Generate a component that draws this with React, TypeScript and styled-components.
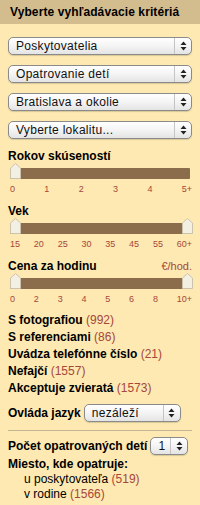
import React from 'react'
import styled, { createGlobalStyle } from 'styled-components'

const GlobalStyle = createGlobalStyle`
  html, body {
    margin: 0;
    padding: 0;
    background: #fde9b1;
  }
  body {
    font-family: "Liberation Sans", Arial, sans-serif;
    color: #000;
  }
`

const Panel = styled.div`
  width: 200px;
  height: 505px;
  overflow: hidden;
  background: #fde9b1;
  display: flex;
  flex-direction: column;
`

const Header = styled.div`
  height: 24px;
  flex-shrink: 0;
  background: #d3bc8d;
  font-weight: bold;
  font-size: 12px;
  line-height: 24px;
  padding-left: 10px;
  letter-spacing: 0.1px;
`

const Body = styled.div`
  display: flex;
  flex-direction: column;
  padding: 13px 8px 0 8px;
`

const SelectStack = styled.div`
  display: flex;
  flex-direction: column;
  gap: 10px;
`

const SelectBox = styled.div<{ $width?: number }>`
  box-sizing: border-box;
  height: 18px;
  width: ${({ $width }) => ($width ? `${$width}px` : '100%')};
  display: flex;
  align-items: stretch;
  border: 1px solid #8a8a8a;
  border-radius: 5px;
  background: linear-gradient(#ffffff 0%, #f4f4f4 50%, #e4e4e4 100%);
  box-shadow: 0 1px 1px rgba(0, 0, 0, 0.15);
  font-size: 12px;
  font-weight: normal;
  letter-spacing: 0.3px;
  flex-shrink: 0;
`

const SelectText = styled.span`
  flex: 1;
  padding-left: 7px;
  line-height: 16px;
  white-space: nowrap;
  overflow: hidden;
  color: #111;
`

const SelectArrows = styled.span`
  width: 16px;
  border-left: 1px solid #c4c4c4;
  display: flex;
  align-items: center;
  justify-content: center;
`

const Arrows = () => (
  <svg width="7" height="10" viewBox="0 0 7 10">
    <path d="M3.5 0.5 L6.5 4 L0.5 4 Z" fill="#222" />
    <path d="M0.5 6 L6.5 6 L3.5 9.5 Z" fill="#222" />
  </svg>
)

const Select = ({ label, width }: { label: string; width?: number }) => (
  <SelectBox $width={width}>
    <SelectText>{label}</SelectText>
    <SelectArrows>
      <Arrows />
    </SelectArrows>
  </SelectBox>
)

const SliderBlock = styled.div<{ $top: number }>`
  display: flex;
  flex-direction: column;
  margin-top: ${({ $top }) => $top}px;
`

const LabelRow = styled.div`
  display: flex;
  justify-content: space-between;
  align-items: baseline;
`

const Label = styled.span`
  font-weight: bold;
  font-size: 12px;
  line-height: 14px;
`

const Unit = styled.span`
  font-size: 11px;
  color: #a5473c;
`

const TrackWrap = styled.div`
  position: relative;
  margin: 0 2px 0 2px;
  height: 16px;
  display: flex;
  align-items: flex-end;
`

const Track = styled.div`
  height: 11px;
  width: 100%;
  background: #8b6c4b;
  border-radius: 1px;
`

const Thumb = styled.svg<{ $side: 'left' | 'right' }>`
  position: absolute;
  top: 0;
  ${({ $side }) => ($side === 'left' ? 'left: 0;' : 'right: -3px;')}
`

const ThumbIcon = ({ side }: { side: 'left' | 'right' }) => (
  <Thumb $side={side} width="11" height="16" viewBox="0 0 11 16">
    <path
      d="M0.5 5 L5.5 0.5 L10.5 5 L10.5 15.5 L0.5 15.5 Z"
      fill="#f3f0e3"
      stroke="#cbc3ae"
      strokeWidth="1"
    />
  </Thumb>
)

const Ticks = styled.div`
  display: flex;
  justify-content: space-between;
  margin: 5px 0 0 2px;
  font-size: 9px;
  line-height: 11px;
  color: #a5473c;
`

const Slider = ({ ticks, range }: { ticks: string[]; range?: boolean }) => (
  <>
    <TrackWrap>
      <Track />
      <ThumbIcon side="left" />
      {range && <ThumbIcon side="right" />}
    </TrackWrap>
    <Ticks>
      {ticks.map((t) => (
        <span key={t}>{t}</span>
      ))}
    </Ticks>
  </>
)

const FilterList = styled.div`
  display: flex;
  flex-direction: column;
  margin-top: 7px;
`

const Filter = styled.div`
  font-weight: bold;
  font-size: 12px;
  line-height: 17px;
`

const Count = styled.span`
  font-weight: normal;
  color: #a5473c;
`

const InlineRow = styled.div<{ $top: number }>`
  display: flex;
  align-items: center;
  gap: 3px;
  margin-top: ${({ $top }) => $top}px;
  font-weight: bold;
  font-size: 12px;
`

const Divider = styled.hr`
  border: none;
  border-top: 1px solid #c2b594;
  margin: 8px 0 0 0;
`

const Place = styled.div`
  margin-top: 2px;
  font-weight: bold;
  font-size: 12px;
  line-height: 15px;
`

const PlaceItem = styled.div`
  font-size: 12px;
  line-height: 15px;
  padding-left: 16px;
`

export default function App() {
  return (
    <>
      <GlobalStyle />
      <Panel>
        <Header>Vyberte vyhľadávacie kritériá</Header>
        <Body>
          <SelectStack>
            <Select label="Poskytovatelia" />
            <Select label="Opatrovanie detí" />
            <Select label="Bratislava a okolie" />
            <Select label="Vyberte lokalitu..." />
          </SelectStack>

          <SliderBlock $top={10}>
            <Label>Rokov skúseností</Label>
            <Slider ticks={['0', '1', '2', '3', '4', '5+']} />
          </SliderBlock>

          <SliderBlock $top={9}>
            <Label>Vek</Label>
            <Slider ticks={['15', '20', '25', '30', '35', '45', '55', '60+']} range />
          </SliderBlock>

          <SliderBlock $top={9}>
            <LabelRow>
              <Label>Cena za hodinu</Label>
              <Unit>€/hod.</Unit>
            </LabelRow>
            <Slider ticks={['0', '2', '3', '4', '5', '6', '8', '10+']} range />
          </SliderBlock>

          <FilterList>
            <Filter>
              S fotografiou <Count>(992)</Count>
            </Filter>
            <Filter>
              S referenciami <Count>(86)</Count>
            </Filter>
            <Filter>
              Uvádza telefónne číslo <Count>(21)</Count>
            </Filter>
            <Filter>
              Nefajčí <Count>(1557)</Count>
            </Filter>
            <Filter>
              Akceptuje zvieratá <Count>(1573)</Count>
            </Filter>
          </FilterList>

          <InlineRow $top={7}>
            Ovláda jazyk
            <Select label="nezáleží" width={97} />
          </InlineRow>

          <Divider />

          <InlineRow $top={6}>
            Počet opatrovaných detí
            <Select label="1" width={38} />
          </InlineRow>

          <Place>Miesto, kde opatruje:</Place>
          <PlaceItem>
            u poskytovateľa <Count>(519)</Count>
          </PlaceItem>
          <PlaceItem>
            v rodine <Count>(1566)</Count>
          </PlaceItem>
        </Body>
      </Panel>
    </>
  )
}
